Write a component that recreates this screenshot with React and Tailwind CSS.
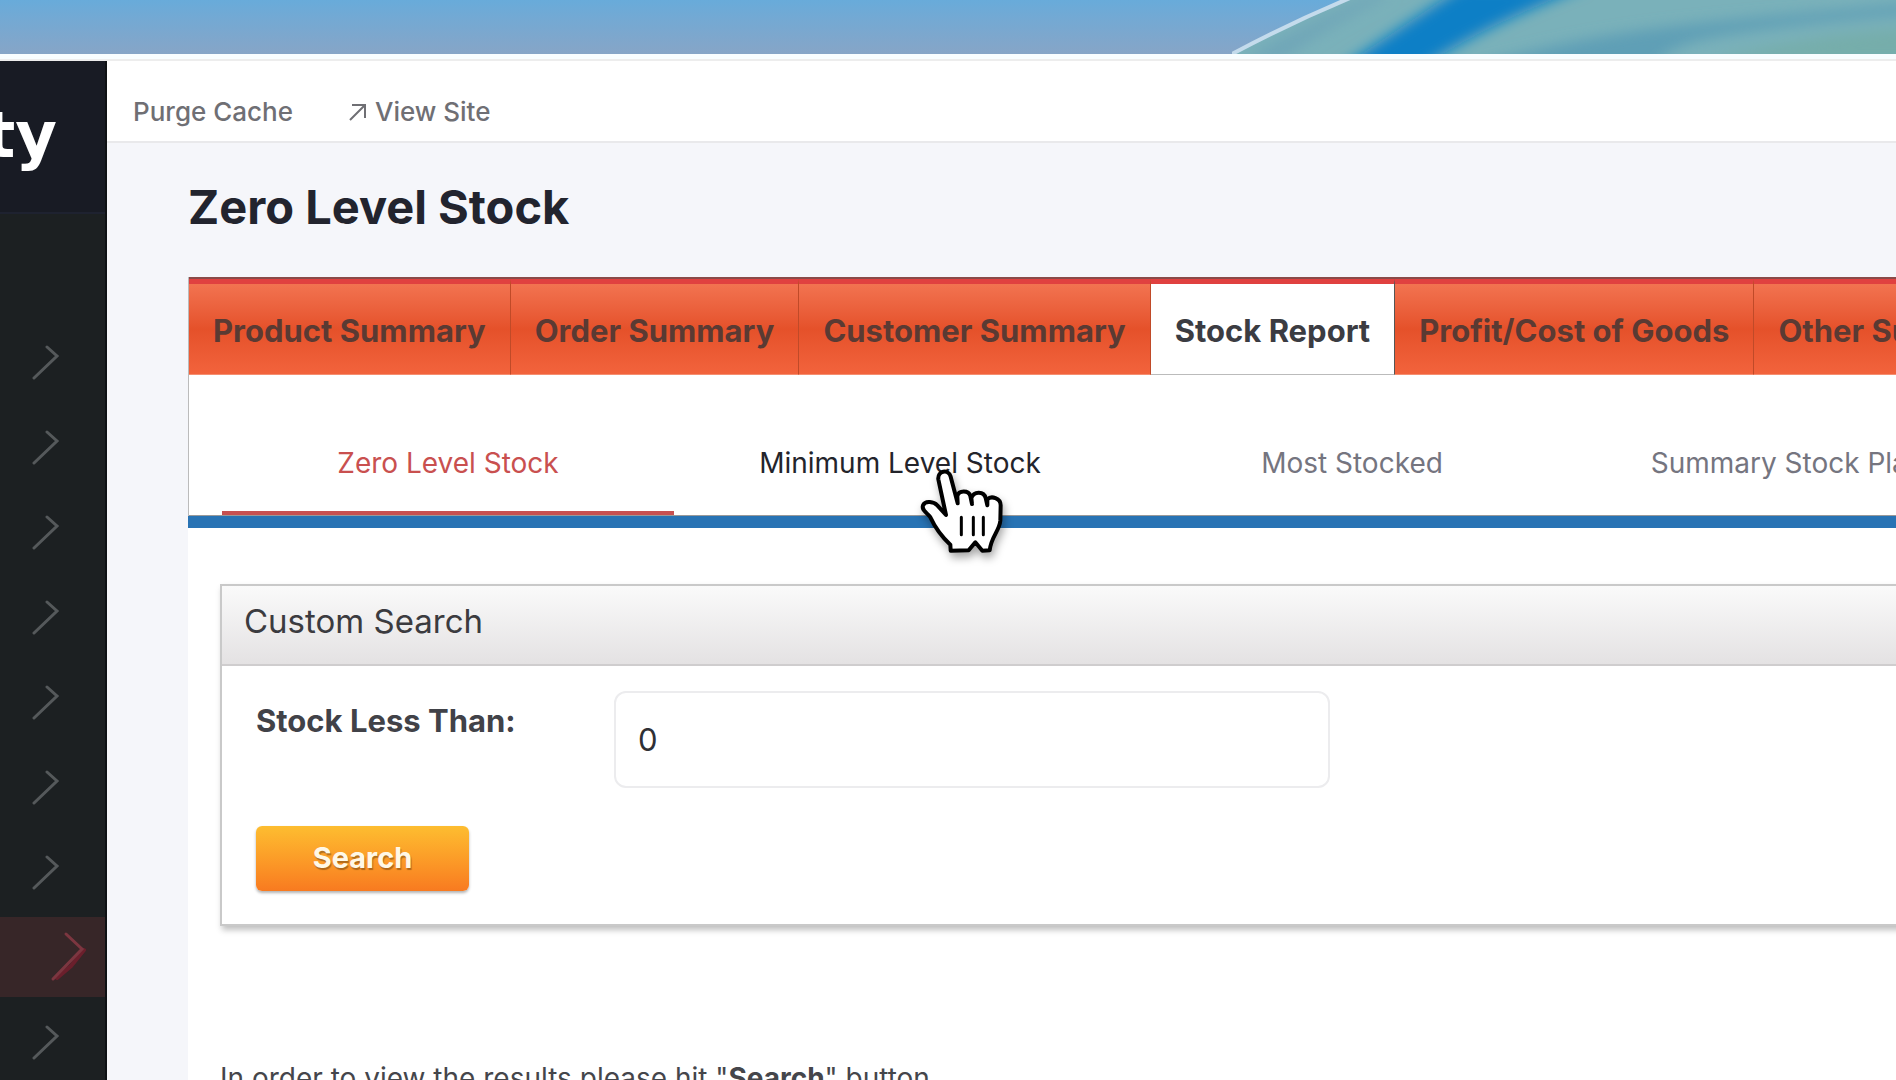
import { useState } from "react";

const menuRows = [
  { id: "dashboard" },
  { id: "catalog" },
  { id: "orders" },
  { id: "customers" },
  { id: "marketing" },
  { id: "content" },
  { id: "settings" },
  { id: "reports", active: true },
  { id: "system" },
];

const reportTabs = ["Product Summary", "Order Summary", "Customer Summary", "Stock Report", "Profit/Cost of Goods", "Other Summary"];

const stockTabs = ["Zero Level Stock", "Minimum Level Stock", "Most Stocked", "Summary Stock Placed"];

function Wallpaper() {
  return (
    <div className="relative h-[54px] shrink-0 overflow-hidden bg-linear-to-b from-[#68abda] to-[#86a5c7]">
      <svg className="absolute top-0 right-0 h-[54px] w-[664px]" viewBox="0 0 664 54">
        <defs>
          <clipPath id="hill"><path d="M0 54 Q56 24 118 -2 H664 V54 Z" /></clipPath>
          <filter id="soft" x="-20%" y="-50%" width="140%" height="200%"><feGaussianBlur stdDeviation="7" /></filter>
        </defs>
        <g clipPath="url(#hill)">
          <rect width="664" height="54" fill="#7ab1ba" />
          <g filter="url(#soft)">
            <path d="M10 60 Q70 26 140 -6 L160 -6 Q100 24 50 60 Z" fill="#70a6b8" />
            <path d="M106 70 Q170 26 232 -14 L356 -14 Q250 26 186 70 Z" fill="#0a7fc6" />
            <path d="M230 70 Q330 38 460 24 Q580 12 680 4 V14 Q560 24 500 34 Q430 44 420 70 Z" fill="#5f9fb6" />
            <path d="M480 60 Q580 34 680 28 V60 Z" fill="#76adaa" />
          </g>
        </g>
        <path d="M0 54 Q56 24 118 -2" fill="none" stroke="#c4dbec" strokeWidth="4" />
      </svg>
    </div>
  );
}

function Chevron({ active }) {
  return active ? (
    <svg className="mr-[19px] h-[54px] w-[36px]" viewBox="0 0 36 54" fill="none" strokeLinecap="round">
      <path d="M7 48 L21 36 L34 20" stroke="#6b1f2c" strokeWidth="4" />
      <path d="M16 4 L32 19 L3 49" stroke="#7c3640" strokeWidth="3" />
    </svg>
  ) : (
    <svg className="mr-[45px] h-[36px] w-[28px]" viewBox="0 0 28 36" fill="none" stroke="#55595b" strokeWidth="3" strokeLinecap="round">
      <path d="M15 3 L25 12 L2 34" />
    </svg>
  );
}

function Sidebar() {
  return (
    <aside className="w-[107px] shrink-0 overflow-hidden border-r-2 border-[#0e1114] bg-[#1c2022]">
      <div className="flex h-[153px] items-center justify-end border-b-2 border-[#1e2230] bg-[#181b24] pr-[48px] pb-[4px]">
        <span className="font-['DejaVu_Sans'] text-[64px] leading-[64px] font-bold text-white">ty</span>
      </div>
      <nav className="mt-[108px] flex flex-col gap-[5px]">
        {menuRows.map((row) => (
          <a key={row.id} href={"#" + row.id} aria-label={row.id}
            className={"flex h-[80px] items-center justify-end " + (row.active ? "bg-[#372628]" : "")}>
            <Chevron active={row.active} />
          </a>
        ))}
      </nav>
    </aside>
  );
}

function HandPointer() {
  return (
    <svg className="pointer-events-none absolute top-[94px] left-1/2 z-10 ml-[20px] h-[87px] w-[84px] drop-shadow-[2px_5px_4px_rgba(0,0,0,0.35)]" viewBox="60 85 252 261">
      <path d="M115 116 C112 90 145 84 152 108 L173 188 L172 166 C176 148 206 148 211 166 L216 190 L214 172 C222 150 252 152 257 172 L262 194 L262 176 C274 164 302 172 302 194 L301 240 C298 272 274 286 269 329 L247 330 L226 305 L206 329 L152 330 L151 312 C120 284 104 258 90 228 C80 216 64 208 69 194 C76 178 102 184 112 194 L138 223 Z"
        fill="#fff" stroke="#000" strokeWidth="12" strokeLinejoin="round" />
      <path d="M184 230 V282 M220 230 V282 M250 230 V282" stroke="#000" strokeWidth="9" strokeLinecap="round" />
    </svg>
  );
}

function ReportTabs() {
  const [current, setCurrent] = useState("Stock Report");
  return (
    <div className="flex h-[98px] overflow-hidden border-t-2 border-[#8a4a48] bg-[#e8552c]">
      {reportTabs.map((tab) => (
        <button key={tab} type="button" onClick={() => setCurrent(tab)}
          className={
            "shrink-0 border-t-[5px] border-r border-b border-t-[#e04140] px-6 pt-[4px] text-[31px] leading-[32px] font-bold whitespace-nowrap " +
            (tab === current
              ? "border-r-[#555] border-b-[#bbb] bg-white text-[#3b3c42]"
              : "border-r-[#c04a28] border-b-[#f58e70] bg-linear-to-b from-[#f27350] via-[#e5512a] to-[#f2633c] text-[#5a3a33]")
          }>
          {tab}
        </button>
      ))}
    </div>
  );
}

function StockTabs() {
  return (
    <nav className="flex h-[141px] border-b border-[#999] bg-white pl-[33px]">
      {stockTabs.map((tab, idx) => (
        <a key={tab} href="#stock"
          className={
            "relative flex w-[452px] shrink-0 items-center justify-center border-b-4 pt-[40px] text-[28px] leading-[32px] whitespace-nowrap " +
            (idx === 0 ? "border-[#c75050] text-[#c9504f]" : idx === 1 ? "border-transparent text-[#23242b]" : "border-transparent text-[#75757f]")
          }>
          {tab}
          {idx === 1 && <HandPointer />}
        </a>
      ))}
    </nav>
  );
}

function SearchPanel() {
  const [stock, setStock] = useState("0");
  return (
    <form onSubmit={(e) => e.preventDefault()} className="-mr-4 border-2 border-[#c9c9c9] bg-white shadow-[2px_4px_6px_rgba(0,0,0,0.25)]">
      <div className="flex h-[80px] items-center border-b-2 border-[#cfcdce] bg-linear-to-b from-[#fafafa] to-[#e4e2e3] px-[22px] pb-[8px]">
        <h2 className="text-[33px] leading-[40px] text-[#3b3b3f]">Custom Search</h2>
      </div>
      <div className="flex items-start px-[34px] pt-[25px]">
        <label htmlFor="stock" className="w-[358px] shrink-0 pt-[14px] text-[31px] leading-[32px] font-bold text-[#414248]">Stock Less Than:</label>
        <input id="stock" type="text" value={stock} onChange={(e) => setStock(e.target.value)}
          className="h-[97px] w-[716px] rounded-xl border-2 border-[#ececee] bg-white px-[22px] text-[31px] text-[#2f3035] outline-none" />
      </div>
      <div className="px-[34px] pt-[38px] pb-[33px]">
        <button type="submit"
          className="h-[65px] w-[213px] rounded-md bg-linear-to-b from-[#fdbd30] to-[#f87a20] pb-[2px] text-[29px] leading-[32px] font-bold text-[#fff8e6] shadow-[0_2px_3px_rgba(0,0,0,0.3)] text-shadow-[1px_2px_1px_rgba(0,0,0,0.3)]">
          Search
        </button>
      </div>
    </form>
  );
}

export default function App() {
  return (
    <div className="flex h-screen flex-col overflow-hidden bg-white font-['Inter',sans-serif]">
      <Wallpaper />
      <div className="h-[7px] shrink-0 border-b-2 border-[#ededed] bg-[#f8fdff]" />
      <div className="flex min-h-0 flex-1">
        <Sidebar />
        <div className="flex min-w-0 flex-1 flex-col bg-[#f5f6fa]">
          <header className="flex h-[82px] shrink-0 items-center gap-[56px] border-b-2 border-[#e9e9eb] bg-white px-[26px] pt-[21px] text-[26px] leading-[32px] font-medium text-[#6f6f74]">
            <a href="#cache">Purge Cache</a>
            <a href="#site" className="flex items-center gap-2">
              <svg className="h-[18px] w-[18px]" viewBox="0 0 18 18" fill="none" stroke="currentColor" strokeWidth="2">
                <path d="M1 17 L16 2 M3 2 H16 V15" />
              </svg>
              View Site
            </a>
          </header>
          <main className="flex min-h-0 flex-1 flex-col overflow-hidden pl-[81px]">
            <h1 className="pt-[36px] pb-[42px] text-[47px] leading-[56px] font-bold text-[#22242e]">Zero Level Stock</h1>
            <div className="shrink-0 border-l border-[#bbb]">
              <ReportTabs />
              <StockTabs />
            </div>
            <div className="h-[12px] shrink-0 bg-[#2873b4]" />
            <div className="flex-1 bg-white pt-[56px] pl-[32px]">
              <SearchPanel />
              <p className="pt-[136px] text-[28px] leading-[32px] text-[#45464b]">
                In order to view the results please hit "<b>Search</b>" button.
              </p>
            </div>
          </main>
        </div>
      </div>
    </div>
  );
}
